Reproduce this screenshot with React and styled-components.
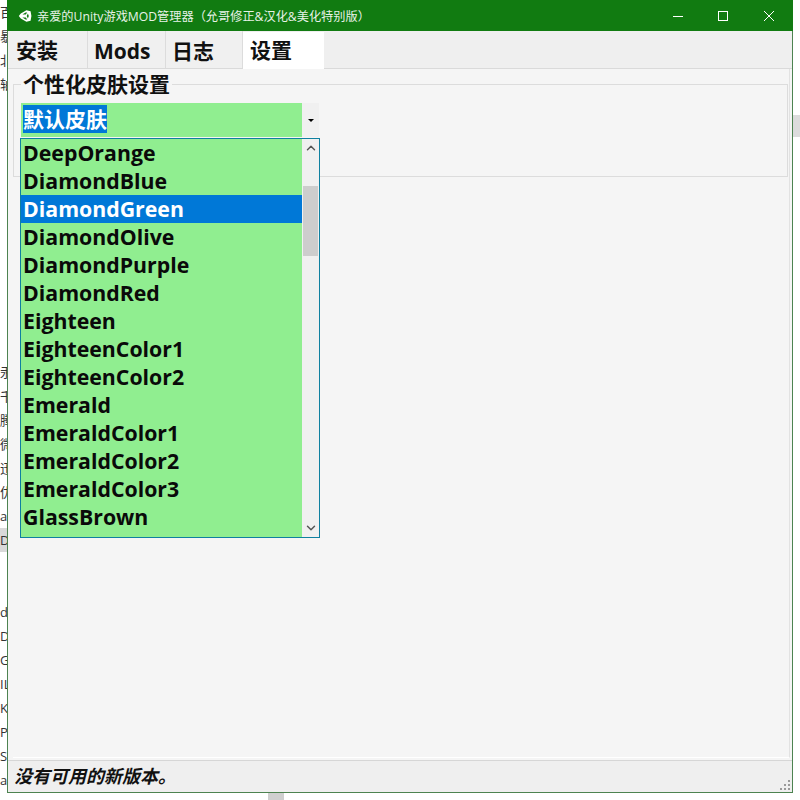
import React from "react";
import styled, { createGlobalStyle } from "styled-components";
import { ChevronUp, ChevronDown } from "lucide-react";

const skins = [
  "DeepOrange", "DiamondBlue", "DiamondGreen", "DiamondOlive", "DiamondPurple", "DiamondRed",
  "Eighteen", "EighteenColor1", "EighteenColor2", "Emerald", "EmeraldColor1", "EmeraldColor2",
  "EmeraldColor3", "GlassBrown", "GlassGreen",
];

// what shows of the list behind the window, left of it (24px rows, blanks kept)
const behind = [
  "百", "暴", "北", "轴", "", "", "", "", "", "", "", "", "", "", "",
  "汞", "千", "腾", "微", "迅", "优", "ar", "D", "", "", "d", "D", "G", "IL", "K", "Pi", "Se", "ac",
];

const Global = createGlobalStyle`
  html, body { margin: 0; padding: 0; background: #fff; }
  body { font-family: "Open Sans", "Noto Sans CJK SC", sans-serif; }
`;

const Desktop = styled.div`
  width: 800px;
  height: 800px;
  overflow: hidden;
  display: flex;
  flex-direction: column;
`;

const DesktopRow = styled.div`
  display: flex;
  height: 793px;
`;

const BehindLeft = styled.div`
  width: 7px;
  overflow: hidden;
  flex: none;
`;

const BehindRow = styled.div`
  width: 40px;
  height: 24px;
  line-height: 24px;
  font-size: 13px;
  color: #333;
  background: ${(p) => (p.$hot ? "#d9d9d9" : "transparent")};
`;

const BehindRight = styled.div`
  flex: 1;
  padding-top: 115px;
`;

const RightBlock = styled.div`
  height: 22px;
  background: #dcdcdc;
`;

const BottomStrip = styled.div`
  height: 7px;
  padding-left: 268px;
`;

const BottomBlock = styled.div`
  width: 16px;
  height: 7px;
  background: #cfcfcf;
`;

const Window = styled.div`
  width: 786px;
  height: 793px;
  box-sizing: border-box;
  flex: none;
  display: flex;
  flex-direction: column;
  background: #f5f5f5;
  border: 1px solid #4d8350;
  border-top: none;
`;

const TitleBar = styled.div`
  height: 31px;
  flex: none;
  margin: 0 -1px;
  background: #117b11;
  color: #e8f2e8;
  display: flex;
  align-items: center;
  padding: 0 1px 0 11px;
  font-size: 12.2px;
`;

const AppIcon = styled.svg`
  width: 14px;
  height: 14px;
  margin-right: 5px;
`;

const TitleText = styled.span`
  flex: 1;
  white-space: nowrap;
`;

const WinButton = styled.div`
  width: 46px;
  height: 31px;
  display: flex;
  align-items: center;
  justify-content: center;
  margin-left: ${(p) => (p.$nudge ? "-1px" : "0")};
`;

const TabRow = styled.div`
  height: 38px;
  flex: none;
  display: flex;
  align-items: flex-end;
  background: #efefef;
  border-bottom: 1px solid #dadada;
  box-sizing: border-box;
`;

const Tab = styled.div`
  box-sizing: border-box;
  width: ${(p) => p.$w}px;
  height: 37px;
  padding-left: ${(p) => p.$pad}px;
  margin-bottom: ${(p) => (p.$active ? "-1px" : "0")};
  background: ${(p) => (p.$active ? "#fff" : "#f0f0f0")};
  border-right: ${(p) => (p.$active ? "none" : "1px solid #dcdcdc")};
  font-size: 21px;
  font-weight: 700;
  line-height: ${(p) => p.$line}px;
  color: #111;
`;

const Page = styled.div`
  flex: 1;
  margin: 0 2px 0 5px;
  padding-top: 15px;
  box-sizing: border-box;
  border-bottom: 1px solid #fff;
  border-right: 1px solid #e2e2e2;
`;

const SkinGroup = styled.div`
  margin-right: 1px;
  padding: 19px 0 0 8px;
  height: 93px;
  box-sizing: border-box;
  box-shadow: inset 0 0 0 1px #dcdcdc;
  position: relative;
`;

const SkinLegend = styled.div`
  position: absolute;
  left: 8px;
  top: -12px;
  padding: 0 2px;
  background: #f5f5f5;
  font-size: 21px;
  font-weight: 700;
  line-height: 24px;
  color: #111;
`;

const Select = styled.div`
  position: relative;
  width: 298px;
  height: 34px;
  display: flex;
  background: #f0f0f0;
`;

const SelectValue = styled.div`
  width: 281px;
  height: 34px;
  box-sizing: border-box;
  padding: 2px 0 0 2px;
  background: #90ee90;
`;

const SelectedText = styled.span`
  display: inline-block;
  height: 28px;
  line-height: 29px;
  background: #0078d7;
  color: #fff;
  font-size: 21px;
  font-weight: 700;
`;

const SelectArrow = styled.div`
  flex: 1;
  display: flex;
  align-items: center;
  justify-content: center;
  &::after {
    content: "";
    border: 3px solid transparent;
    border-top: 3px solid #000;
    margin-top: 3px;
  }
`;

const Popup = styled.div`
  position: absolute;
  left: -1px;
  top: 35px;
  width: 300px;
  height: 400px;
  box-sizing: border-box;
  border: 1px solid #0f80a0;
  display: flex;
  background: #f0f0f0;
`;

const SkinList = styled.div`
  width: 281px;
  height: 398px;
  overflow: hidden;
  background: #90ee90;
`;

const SkinItem = styled.div`
  height: 28px;
  line-height: 28px;
  padding-left: 2px;
  font-size: 21.3px;
  font-weight: 700;
  background: ${(p) => (p.$on ? "#0078d7" : "transparent")};
  color: ${(p) => (p.$on ? "#fff" : "#0a0a0a")};
`;

const Scrollbar = styled.div`
  flex: 1;
  display: flex;
  flex-direction: column;
  align-items: center;
  justify-content: space-between;
  position: relative;
  padding: 2px 0;
  color: #555;
`;

const Thumb = styled.div`
  position: absolute;
  top: 47px;
  left: 1px;
  right: 1px;
  height: 70px;
  background: #cdcdcd;
`;

const StatusBar = styled.div`
  height: 32px;
  flex: none;
  display: flex;
  align-items: center;
  justify-content: space-between;
  box-sizing: border-box;
  margin-top: 2px;
  padding: 0 0 3px 6px;
  background: #efefef;
  border-top: 1px solid #d6d6d6;
`;

const StatusText = styled.span`
  font-size: 18px;
  font-weight: 700;
  font-style: italic;
  color: #111;
`;

const Grip = styled.svg`
  width: 12px;
  height: 12px;
  align-self: flex-end;
  margin: 0 1px -2px 0;
`;

export default function App() {
  return (
    <Desktop>
      <Global />
      <DesktopRow>
        <BehindLeft>
          {behind.map((t, i) => (
            <BehindRow key={i} $hot={i === 22}>{t}</BehindRow>
          ))}
        </BehindLeft>
        <Window>
          <TitleBar>
            <AppIcon viewBox="0 0 14 14">
              <path fill="#fff" fillRule="evenodd" d="M8.4 1.2 12.6 2.2 13.4 7l-.8 4.8-4.2 1-5.6-3.4L.8 7l2-2.4zM7.6 3.4 4.4 5.6h3.4l1.4-2zM9.9 4.4 8.7 7l1.2 2.6.9-2.6zM4.4 8.4l3.2 2.2 1.6.0-1.4-2.2z" />
            </AppIcon>
            <TitleText>亲爱的Unity游戏MOD管理器（允哥修正&amp;汉化&amp;美化特别版）</TitleText>
            <WinButton>
              <svg width="12" height="12" viewBox="0 0 12 12"><path d="M1 6.5h10" stroke="#fff" /></svg>
            </WinButton>
            <WinButton $nudge>
              <svg width="12" height="12" viewBox="0 0 12 12"><rect x="1.5" y="1.5" width="9" height="9" fill="none" stroke="#fff" /></svg>
            </WinButton>
            <WinButton>
              <svg width="12" height="12" viewBox="0 0 12 12"><path d="M1 1l10 10M11 1 1 11" stroke="#fff" /></svg>
            </WinButton>
          </TitleBar>
          <TabRow>
            <Tab $w={80} $pad={8} $line={39}>安装</Tab>
            <Tab $w={78} $pad={6} $line={41}>Mods</Tab>
            <Tab $w={77} $pad={6} $line={41}>日志</Tab>
            <Tab $w={81} $pad={7} $line={37} $active>设置</Tab>
          </TabRow>
          <Page>
            <SkinGroup>
              <SkinLegend>个性化皮肤设置</SkinLegend>
              <Select>
                <SelectValue><SelectedText>默认皮肤</SelectedText></SelectValue>
                <SelectArrow />
                <Popup>
                  <SkinList>
                    {skins.map((s) => (
                      <SkinItem key={s} $on={s === "DiamondGreen"}>{s}</SkinItem>
                    ))}
                  </SkinList>
                  <Scrollbar>
                    <ChevronUp size={14} strokeWidth={2.5} />
                    <Thumb />
                    <ChevronDown size={14} strokeWidth={2.5} />
                  </Scrollbar>
                </Popup>
              </Select>
            </SkinGroup>
          </Page>
          <StatusBar>
            <StatusText>没有可用的新版本。</StatusText>
            <Grip viewBox="0 0 12 12">
              <g fill="#9a9a9a">
                <rect x="9" y="1" width="2" height="2" />
                <rect x="5" y="5" width="2" height="2" />
                <rect x="9" y="5" width="2" height="2" />
                <rect x="1" y="9" width="2" height="2" />
                <rect x="5" y="9" width="2" height="2" />
                <rect x="9" y="9" width="2" height="2" />
              </g>
            </Grip>
          </StatusBar>
        </Window>
        <BehindRight>
          <RightBlock />
        </BehindRight>
      </DesktopRow>
      <BottomStrip>
        <BottomBlock />
      </BottomStrip>
    </Desktop>
  );
}
